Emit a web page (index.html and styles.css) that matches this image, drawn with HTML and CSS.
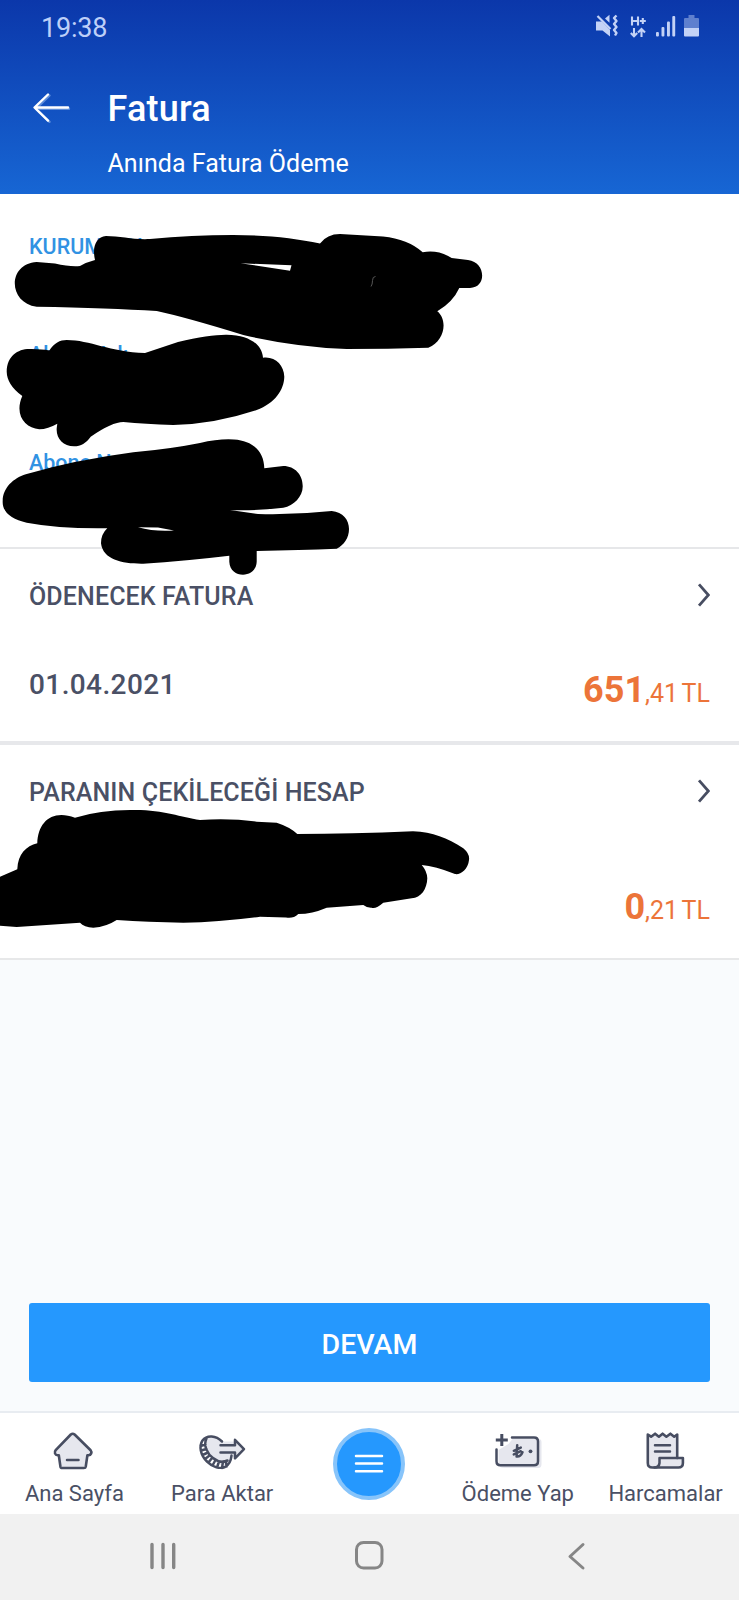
FILE: index.html
```html
<!DOCTYPE html>
<html lang="tr">
<head>
<meta charset="utf-8">
<title>Fatura</title>
<link rel="stylesheet" href="styles.css">
</head>
<body>
<div class="screen">
  <header class="header">
    <div class="status">
      <span class="clock">19:38</span>
      <svg class="status-icons" width="104" height="24" viewBox="595 14 104 24">
        <g fill="#c3d2f6">
          <path d="M596 21.500h6l8 8.500v6.500l-7.500-6h-6.500z"/>
          <path d="M605 18.500l4.500-3.800v8z"/>
          <path d="M597.500 16l13 13" stroke="#c3d2f6" stroke-width="2.200"/>
          <path d="M616.500 15.500l-2.500 2.500 2.500 3-2.500 3 2.500 3-2.500 3 2.500 3-1.500 2.500" fill="none" stroke="#c3d2f6" stroke-width="2.400" stroke-linejoin="round"/>
          <path d="M632 16.500v9M638 16.500v9M632 21h6M639.800 21h6M642.800 18v6M634 28v8M630.800 33l3.200 3.200 3.200-3.200M641.500 37v-7.500M638 32.500l3.500-3.500 3.500 3.500" fill="none" stroke="#c3d2f6" stroke-width="2.100"/>
          <rect x="656" y="32" width="2.900" height="4.500" rx="1"/>
          <rect x="661.500" y="27" width="2.900" height="9.500" rx="1"/>
          <rect x="667" y="21.500" width="2.900" height="15" rx="1"/>
          <rect x="672.300" y="16" width="2.900" height="20.500" rx="1"/>
          <path d="M684 28v-9q0-1 1-1h3.500v-3h6v3h3.500q1 0 1 1v9z" opacity=".45"/>
          <path d="M684 28h15v7.500q0 1-1 1h-13q-1 0-1-1z"/>
        </g>
      </svg>
    </div>
    <div class="titlebar">
      <svg class="back" width="40" height="32" viewBox="32 92 40 32" fill="none" stroke-width="2.400" stroke-linecap="round" stroke-linejoin="round">
        <path d="M49.500 95.500L36 108.600l13.500 13.200M37 108.800h32" stroke="#7ba5e6" opacity=".7"/>
        <path d="M48 94.500L34.500 107.500l13.500 13.200M35 107.500h33" stroke="#fff"/>
      </svg>
      <div class="titles">
        <h1 class="title">Fatura</h1>
        <p class="subtitle">Anında Fatura Ödeme</p>
      </div>
    </div>
  </header>

  <section class="fields">
    <div class="field">KURUM ADI</div>
    <div class="field">Abone Adı</div>
    <div class="field">Abone No</div>
  </section>

  <section class="card invoice">
    <div class="card-head">
      <h2 class="card-title">ÖDENECEK FATURA</h2>
      <svg class="chevron" width="14" height="24" viewBox="0 0 14 24"><path d="M3 1.300L12.400 12 3 22.700"/></svg>
    </div>
    <div class="card-row">
      <span class="date">01.04.2021</span>
      <span class="amount"><b>651</b>,41 TL</span>
    </div>
  </section>

  <section class="card account">
    <div class="card-head">
      <h2 class="card-title">PARANIN ÇEKİLECEĞİ HESAP</h2>
      <svg class="chevron" width="14" height="24" viewBox="0 0 14 24"><path d="M3 1.300L12.400 12 3 22.700"/></svg>
    </div>
    <div class="card-row account-row">
      <span class="amount"><b>0</b>,21 TL</span>
    </div>
  </section>

  <main class="space">
    <button class="continue">DEVAM</button>
  </main>

  <nav class="tabs">
    <a class="tab">
      <svg class="icon" width="56" height="46" viewBox="46 1428 56 46">
        <path class="shape" d="M70.800 1434.500q1.900-1.500 3.800 0l16 15.700q1.200 1.500.6 3.200-.8 1.800-2.600 1.800h-1.200l-1.600 11.200q-.3 1.600-1.900 1.600h-21.600q-1.600 0-1.900-1.600l-1.600-11.200h-1.300q-1.800 0-2.500-1.800-.6-1.700.7-3.200z"/>
        <path class="line" d="M67 1460h11.500"/>
      </svg>
      <span class="tab-label">Ana Sayfa</span>
    </a>
    <a class="tab">
      <svg class="icon" width="56" height="46" viewBox="194 1428 56 46">
        <path class="fill" d="M207 1438q7-3 14 3.500h13v-3l9 9.500-7 9h-3q-2 5-6 9-7 0-14-6-8-10-6-22z"/>
        <path class="line" d="M222 1441.500C216 1435.500 207 1434.500 202.500 1440.500c-3.500 5.500-2.500 14 4.500 21 6 6 13 7.500 18 5.500 4-2 6-6 6.500-11.500M206.500 1438.500c-3.500 7 1 15.500 6.500 19.500 5 4 10 4.500 14.500 2.500M200.500 1446l5-1.500M201 1450.500l5.500-1.500M202.500 1455l5.500-2.500M205 1459l4.500-3.500M208.500 1462.500l3.500-4.500M212.500 1465.500l3-5.500M217 1467.500l2-6M222 1468l1-6.500M226.500 1466.500l-.5-5"/>
        <path class="line" d="M220.500 1445.300h14.500v-5.500l9 9.300-9 9.300v-5.800h-14.500"/>
      </svg>
      <span class="tab-label">Para Aktar</span>
    </a>
    <a class="tab menu-tab">
      <span class="menu"><svg width="30" height="22" viewBox="0 0 30 22"><path d="M2 3h26M2 10.500h26M2 18.200h26" stroke="#fff" stroke-width="2.500" stroke-linecap="round"/></svg></span>
    </a>
    <a class="tab">
      <svg class="icon" width="56" height="46" viewBox="489.500 1428 56 46">
        <path class="fill" d="M499 1450l10-6 4-5h26q3 0 3 3v22q0 4-3 4h-34q-6 0-6-4z"/>
        <path class="line" d="M512.500 1437.600h22q4 0 4 4v19.600q0 4-4 4h-33.500q-4 0-4-4v-11.700"/>
        <path class="plus" d="M502.300 1434v12M496.300 1440h12"/>
        <path class="line" d="M517.700 1445.300l-.6 11.200q3.900.5 5.900-4.300M514.300 1450.800l7-3.200M514.300 1454.400l7-3.200"/>
        <circle cx="531" cy="1451.300" r="1.900" fill="#474d61"/>
      </svg>
      <span class="tab-label">Ödeme Yap</span>
    </a>
    <a class="tab">
      <svg class="icon" width="56" height="46" viewBox="637.500 1428 56 46">
        <path class="shape" d="M648.300 1434.500l3.300 2.200 4-3 3.800 3 3.700-3 3.800 3 4-3 3.800 3 3-2.200v23.500h5.700v5q0 4.500-4.500 4.500h-26.100q-4.500 0-4.500-4.500z"/>
        <path class="line" d="M677.700 1458h-17.700v5q-.5 4.500-5 4.500M655.500 1445.200h15M655.500 1451.500h15"/>
      </svg>
      <span class="tab-label">Harcamalar</span>
    </a>
  </nav>

  <footer class="system">
    <svg width="28" height="30" viewBox="0 0 28 30" stroke="#868686" stroke-width="3.400" stroke-linecap="round"><path d="M3 3.500v23M14 3.500v23M24.700 3.500v23"/></svg>
    <svg width="30" height="30" viewBox="0 0 30 30" fill="none" stroke="#868686" stroke-width="3"><rect x="2.500" y="1.500" width="25.500" height="25.500" rx="7"/></svg>
    <svg width="20" height="30" viewBox="0 0 20 30" fill="none" stroke="#868686" stroke-width="3" stroke-linecap="round" stroke-linejoin="round"><path d="M16 3.500L3 15.500 16 27"/></svg>
  </footer>

  <svg class="scribbles" width="739" height="1600" viewBox="0 0 739 1600">
    <path d="M95 260C92 247 96 237 106 236C120 236 135 240 150 239Q192 235 233 235C265 235 295 238 320 243.500Q327 234 340 234L383 236.500Q408 239 422.700 252.300Q438 249.500 451.700 258L468 260C486 262 487 288 470 288L459.300 288Q453 302 437.300 311.300C448 320 445 341 428.300 347.700Q388 349 346.700 349Q295 347 243.300 335Q185 317 156.700 311Q110 308 36.700 306.700C8 303 7 264 36.700 262L55 263.500Q70 267 80 266Q87 262 95 260ZM240.500 263.300L290 270.700L291.500 265.300Z"/>
    <path d="M49.300 350.500C54 343 60 340 66.700 340C90 340 110 352 145 353L178 342Q210 334.500 226.700 334.700C250 335 262 345 263 357.700C275 356 284 365 284.300 376.700C284 390 275 403 256.700 410Q215 424 173.300 425Q145 424 123.300 422Q112 422 90.700 436.700C86 443 81 446.300 74 446.300C63 446 56 438 56.700 428.300L57.300 423.700Q48 429 39.300 429.300C25 428 14 415 22.300 396Q7 385 6.700 371.700C7 355 19 348 31.700 349Q42 349 49.300 350.500Z"/>
    <path fill-rule="evenodd" d="M2.700 500.700C3 488 13 478 26.700 474Q75 460 133.300 452.300Q170 449 200 443Q219 438.500 234 439.500C254 441 264 452 264.300 468.300L283.300 466C295 466 302.700 475 302.700 486C303 496 294 506 283.300 507.700Q255 511 230 510L258 514Q295 515 331.700 511C343 512 349 520 349 529C349 538 344 545 336.700 548.700Q300 550 256.700 551V561.700C256 579 230 579 229.300 561.700V555.700Q185 561 143.300 563.700C123 564 103 560 101 543.300Q101 534 107.300 528.300Q60 529 26.700 522.700C11 519 2 512 2.700 500.700ZM138 527.300Q155 532 174 530.500L158 527.500Z"/>
    <path d="M0 876.700L17.300 869.300C18 854 26 846 37.300 843.300C38 822 52 809 75 817.700Q100 810 130 810C162 809 180 817 200 820Q230 818 256.700 821.700L276.700 822.700Q290 827 297.300 834Q350 834 413 831.300C433 832 447 838 463.300 848.300Q470 854 469 860C468 870 460 875 455 874Q435 866 421.700 865Q427 871 427.300 878.300C427 889 421 898 411.700 898.300L383.300 902.700Q376 909 371.700 907.700Q367 908 363.300 905L326.700 907.700Q312 914 298.300 914Q293 919 286 917.500L260 916.700Q220 922 183.300 922.700Q148 922 116.700 920Q106 927 93.300 927.700Q84 927 80 922.700L16.700 927L0 925.700Z"/>
    <path class="speck" d="M375.500 276.500q-3 0-3 4 0 4-1.500 6"/>
  </svg>
</div>
</body>
</html>
```

FILE: styles.css
```css
* { box-sizing: border-box; }
body { margin: 0; font-family: Roboto, "Liberation Sans", sans-serif; color: #4a5065; }
h1, h2, p { margin: 0; font-weight: 500; }
svg { display: block; flex: none; }

.screen { position: relative; width: 739px; height: 1600px; display: flex; flex-direction: column; overflow: hidden; background: #f9fbfd; white-space: nowrap; }
.screen > * { flex: none; }

.header { height: 194px; padding-top: 12px; background: linear-gradient(#0b37aa, #1766d4); color: #fff; }
.status { display: flex; justify-content: space-between; height: 32px; padding: 0 40px 0 41px; }
.clock { font-size: 27px; line-height: 32px; letter-spacing: -.2px; color: #bdcff8; }
.status-icons { margin-top: 2px; }
.titlebar { display: flex; padding: 44px 0 0 32px; }
.back { margin-top: 4px; }
.titles { padding-left: 35.5px; }
.title { font-size: 36px; line-height: 42px; letter-spacing: .2px; }
.subtitle { margin-top: 19px; font-size: 25px; line-height: 30px; font-weight: 400; letter-spacing: .04px; }

.fields { height: 355px; padding: 40px 29px 0; background: #fff; border-bottom: 2px solid #e6e7e9; }
.field { height: 108px; font-size: 21.5px; line-height: 26px; font-weight: 500; color: #3192e3; }

.card { background: #fff; padding: 33px 29px 0; }
.invoice { height: 196px; border-bottom: 4px solid #e7e8eb; }
.account { height: 215px; border-bottom: 2px solid #e7e8e9; }
.card-head { display: flex; justify-content: space-between; height: 30px; }
.card-title { font-size: 25px; line-height: 30px; letter-spacing: .12px; }
.chevron { margin-top: 1px; fill: none; stroke: #474d61; stroke-width: 2.8; }
.card-row { display: flex; justify-content: space-between; margin-top: 56px; }
.date { font-size: 28px; line-height: 34px; font-weight: 500; letter-spacing: .4px; }
.amount { font-size: 25px; line-height: 42px; padding-top: 1px; color: #ec7439; word-spacing: -2.2px; }
.amount b { font-size: 36px; font-weight: 700; }
.account-row { justify-content: flex-end; margin-top: 77px; }

.space { height: 451px; padding: 0 29px 29px; display: flex; align-items: flex-end; }
.continue { width: 100%; height: 79px; border: 0; border-radius: 3px; background: #2598fe; color: #fff; font: 500 28.5px/32px Roboto, sans-serif; padding: 4px 0 0; }

.tabs { height: 103px; border-top: 2px solid #e8ecf1; background: #fff; display: grid; grid-template-columns: repeat(5, 1fr); }
.tab { display: flex; flex-direction: column; align-items: center; padding-top: 15px; }
.tab-label { margin-top: 7px; padding-left: 1px; font-size: 22px; line-height: 26px; }
.shape { fill: #e6e7ee; stroke: #474d61; stroke-width: 2.6; stroke-linejoin: round; }
.fill { fill: #e6e7ee; }
.line { fill: none; stroke: #474d61; stroke-width: 2.5; stroke-linecap: round; stroke-linejoin: round; }
.plus { fill: none; stroke: #474d61; stroke-width: 3; }
.menu-tab { padding-top: 15px; }
.menu { width: 72px; height: 72px; border-radius: 50%; border: 4px solid #87c4fa; background: #2598fe; display: flex; align-items: center; justify-content: center; }

.system { height: 86px; background: #f1f1f1; display: grid; grid-template-columns: 205px 213px auto; justify-content: start; padding: 27px 0 0 149px; }
.scribbles { position: absolute; left: 0; top: 0; }
.speck { fill: none; stroke: #555; stroke-width: 1; }
```
